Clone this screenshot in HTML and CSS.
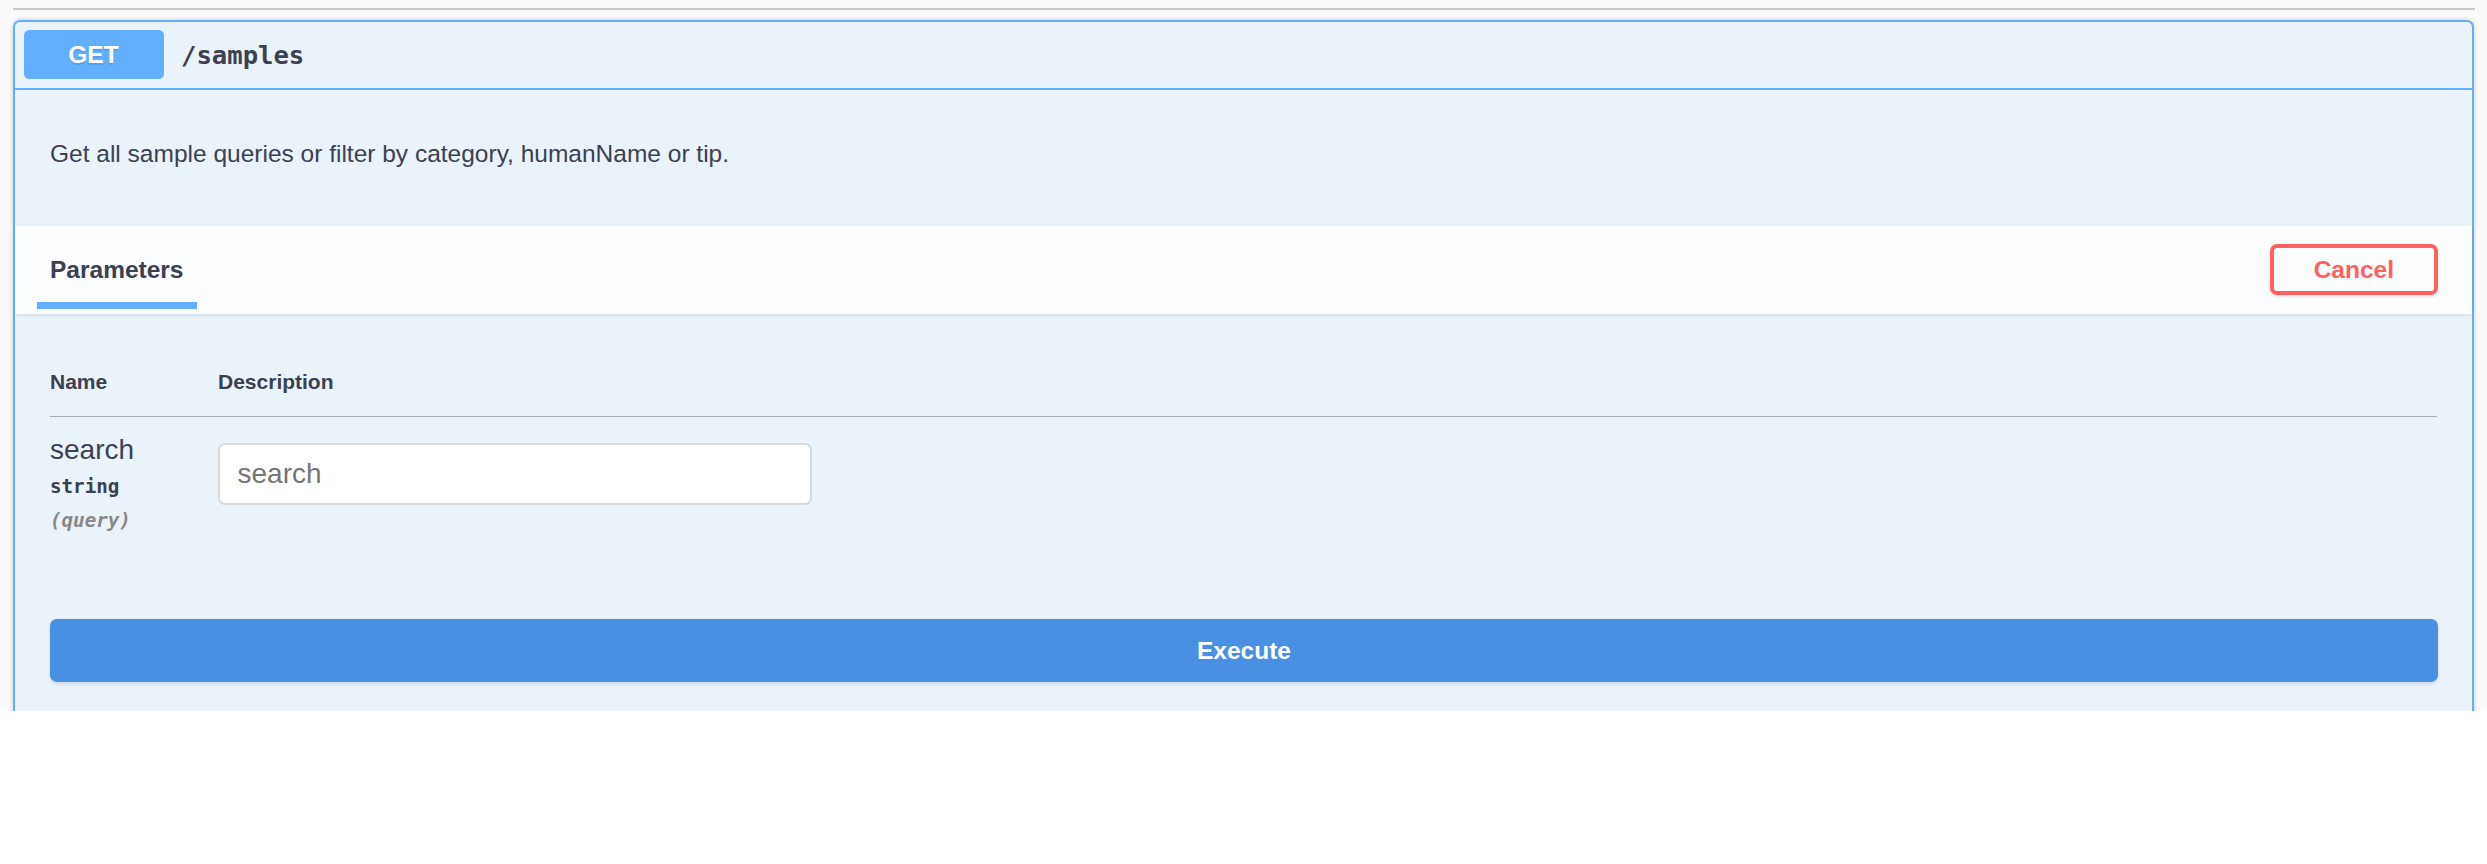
FILE: index.html
```html
<!DOCTYPE html>
<html lang="en">
<head>
<meta charset="utf-8">
<title>GET /samples</title>
<link rel="stylesheet" href="styles.css">
</head>
<body>
<div class="page">
  <div class="tag-line"></div>
  <div class="opblock">
    <div class="summary">
      <span class="method">GET</span>
      <span class="path">/samples</span>
    </div>
    <div class="desc">
      <p>Get all sample queries or filter by category, humanName or tip.</p>
    </div>
    <div class="section-header">
      <h4 class="tab-title"><span>Parameters</span></h4>
      <button class="btn cancel">Cancel</button>
    </div>
    <div class="table-container">
      <table class="params">
        <thead>
          <tr><td class="col-name">Name</td><td>Description</td></tr>
        </thead>
        <tbody>
          <tr>
            <td class="col-name">
              <div class="param-name">search</div>
              <div class="param-type">string</div>
              <div class="param-in">(query)</div>
            </td>
            <td><input class="param-input" type="text" placeholder="search"></td>
          </tr>
        </tbody>
      </table>
    </div>
    <div class="execute-wrapper">
      <button class="btn execute">Execute</button>
    </div>
  </div>
</div>
</body>
</html>
```

FILE: styles.css
```css
* { box-sizing: border-box; }

body {
  margin: 0;
  background: #ffffff;
  font-family: "Liberation Sans", Arial, sans-serif;
  color: #3b4151;
}

.page {
  height: 711px;
  overflow: hidden;
  background: #fafafa;
  padding: 7.5px 13px 0 13px;
}

.tag-line {
  height: 2px;
  background: rgba(59, 65, 81, 0.28);
  margin-right: -1px;
}

.opblock {
  margin-top: 10px;
  border: 2px solid #61affe;
  border-radius: 7px;
  background: rgba(97, 175, 254, 0.1);
  box-shadow: 0 0 5px rgba(0, 0, 0, 0.19);
}

.summary {
  display: flex;
  align-items: center;
  padding: 8.5px;
  border-bottom: 2px solid #61affe;
}

.method {
  min-width: 140px;
  padding: 10.5px 0;
  line-height: 28px;
  font-size: 24.5px;
  font-weight: 700;
  text-align: center;
  color: #ffffff;
  background: #61affe;
  border-radius: 5.25px;
  text-shadow: 0 1.75px 0 rgba(0, 0, 0, 0.1);
}

.path {
  padding: 0 17.5px;
  font-family: "DejaVu Sans Mono", "Liberation Mono", monospace;
  font-size: 25.6px;
  font-weight: 700;
  color: #3b4151;
}

.desc {
  padding: 50px 35px 58.5px 35px;
}

.desc p {
  margin: 0;
  font-size: 24.5px;
  line-height: 28px;
}

.section-header {
  display: flex;
  align-items: center;
  justify-content: space-between;
  min-height: 87.5px;
  padding: 14px 34px 14px 35px;
  background: rgba(255, 255, 255, 0.8);
  box-shadow: 0 1.75px 3.5px rgba(0, 0, 0, 0.1);
}

.tab-title {
  margin: 0;
  font-size: 24.5px;
  font-weight: 700;
}

.tab-title span {
  position: relative;
}

.tab-title span::after {
  content: "";
  position: absolute;
  left: -10%;
  width: 120%;
  bottom: -26px;
  height: 7px;
  background: #61affe;
}

.btn {
  font-family: "Liberation Sans", Arial, sans-serif;
  font-size: 24.5px;
  font-weight: 700;
  border-radius: 7px;
  box-shadow: 0 1.75px 3.5px rgba(0, 0, 0, 0.1);
  cursor: pointer;
}

.cancel {
  height: 51px;
  padding: 0 40px;
  border: 4px solid #ff6060;
  color: #ff6060;
  background: transparent;
}

.table-container {
  padding: 35px;
}

.params {
  width: 100%;
  border-collapse: collapse;
}

.params thead td {
  padding: 21px 0 22px 0;
  font-size: 21px;
  font-weight: 700;
  border-bottom: 1px solid rgba(59, 65, 81, 0.22);
}

.params td {
  text-align: left;
  vertical-align: top;
}

.params tbody td {
  padding: 17.5px 0;
}

.col-name {
  width: 168px;
}

.param-name {
  font-size: 28px;
}

.param-type {
  padding: 8.75px 0;
  font-family: "DejaVu Sans Mono", "Liberation Mono", monospace;
  font-size: 19.2px;
  font-weight: 700;
}

.param-in {
  margin-top: 2px;
  font-family: "DejaVu Sans Mono", "Liberation Mono", monospace;
  font-size: 19.2px;
  font-style: italic;
  font-weight: 700;
  color: #888888;
}

.param-input {
  display: block;
  width: 594px;
  height: 62px;
  margin: 8.75px 0;
  padding: 0 17.5px;
  border: 2px solid #d9d9d9;
  border-radius: 7px;
  background: #ffffff;
  font-family: "Liberation Sans", Arial, sans-serif;
  font-size: 28px;
  color: #3b4151;
}

.param-input::placeholder {
  color: #757575;
}

.execute-wrapper {
  padding: 35px 34px 35px 35px;
}

.execute {
  display: block;
  width: 100%;
  height: 63px;
  border: 2px solid #4990e2;
  background: #4990e2;
  color: #ffffff;
}
```
